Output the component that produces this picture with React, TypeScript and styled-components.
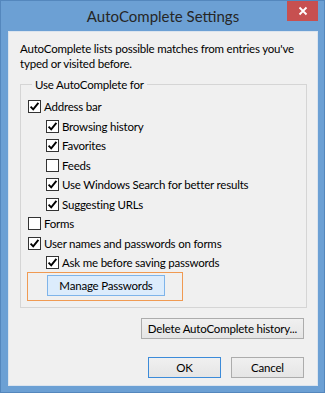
import React from "react";
import styled, { createGlobalStyle } from "styled-components";

const Global = createGlobalStyle`
  html, body { margin: 0; padding: 0; background: #6b9fd3; }
  body { font-family: Lato, "Liberation Sans", sans-serif; }
`;

const Window = styled.div`
  width: 325px;
  height: 393px;
  box-sizing: border-box;
  background: #6ca0d4;
  border: 1px solid #5487bd;
  display: flex;
  flex-direction: column;
  padding: 0 6px 6px 7px;
`;

const TitleBar = styled.div`
  height: 30px;
  display: grid;
  grid-template-columns: 1fr auto 1fr;
  align-items: start;
`;

const Title = styled.div`
  grid-column: 2;
  font-size: 15px;
  line-height: 30px;
  color: #262626;
`;

const Close = styled.div`
  grid-column: 3;
  justify-self: end;
  width: 31px;
  height: 20px;
  background: #c75050;
  color: #fff;
  display: flex;
  align-items: center;
  justify-content: center;
`;

const Panel = styled.div`
  flex: 1;
  background: #f0f0f0;
  border: 1px solid #dbe4ee;
  padding: 9px 10px 0 11px;
  display: flex;
  flex-direction: column;
  font-size: 11.5px;
  letter-spacing: -0.2px;
  line-height: 15px;
  color: #000;
`;

const Intro = styled.p`
  margin: 0 0 6px;
  white-space: nowrap;
`;

const Group = styled.fieldset`
  margin: 0;
  border: 1px solid #d5d5d5;
  padding: 5px 7px 6px 7px;
  min-width: 0;
`;

const Legend = styled.legend`
  margin-left: 4px;
  padding: 0 3px;
  line-height: 15px;
`;

const Row = styled.label<{ $level?: number }>`
  display: flex;
  align-items: center;
  gap: 3px;
  height: 19.5px;
  white-space: nowrap;
  padding-left: ${(p) => (p.$level ?? 0) * 18}px;
`;

const Box = styled.span`
  width: 13px;
  height: 13px;
  box-sizing: border-box;
  border: 1px solid #333;
  background: #fff;
  display: inline-flex;
  flex-shrink: 0;
`;

const Highlight = styled.div`
  width: fit-content;
  margin: -1px 0 0 -1px;
  border: 1px solid #f09a52;
  padding: 2px 17px 4px 19px;
`;

const Button = styled.div<{ $width: number; $variant?: "default" | "hot" }>`
  width: ${(p) => p.$width}px;
  height: 21px;
  box-sizing: border-box;
  display: flex;
  align-items: center;
  justify-content: center;
  white-space: nowrap;
  border: 1px solid
    ${(p) =>
      p.$variant === "default" ? "#3c8bd9" : p.$variant === "hot" ? "#7eb4ea" : "#acacac"};
  background: ${(p) =>
    p.$variant === "hot" ? "#dcecfc" : "linear-gradient(#f0f0f0, #e5e5e5)"};
  color: #000;
  font-size: 11.5px;
`;

const ButtonRow = styled.div<{ $top: number }>`
  display: flex;
  justify-content: flex-end;
  gap: 10px;
  margin-top: ${(p) => p.$top}px;
  padding-right: 3px;
`;

function Check({ on }: { on?: boolean }) {
  return (
    <Box>
      {on && (
        <svg width="11" height="11" viewBox="0 0 11 11">
          <path d="M1.6 5.6 L4.2 8.3 L9.4 1.8" fill="none" stroke="#000" strokeWidth="1.9" />
        </svg>
      )}
    </Box>
  );
}

const items: [string, number, boolean][] = [
  ["Address bar", 0, true],
  ["Browsing history", 1, true],
  ["Favorites", 1, true],
  ["Feeds", 1, false],
  ["Use Windows Search for better results", 1, true],
  ["Suggesting URLs", 1, true],
  ["Forms", 0, false],
  ["User names and passwords on forms", 0, true],
  ["Ask me before saving passwords", 1, true],
];

export default function App() {
  return (
    <>
      <Global />
      <Window>
        <TitleBar>
          <Title>AutoComplete Settings</Title>
          <Close>
            <svg width="10" height="10" viewBox="0 0 10 10">
              <path d="M1.5 1.5 L8.5 8.5 M8.5 1.5 L1.5 8.5" stroke="#fff" strokeWidth="1.8" />
            </svg>
          </Close>
        </TitleBar>
        <Panel>
          <Intro>
            AutoComplete lists possible matches from entries you've
            <br />
            typed or visited before.
          </Intro>
          <Group>
            <Legend>Use AutoComplete for</Legend>
            {items.map(([label, level, on]) => (
              <Row key={label} $level={level}>
                <Check on={on} />
                {label}
              </Row>
            ))}
            <Highlight>
              <Button $width={118} $variant="hot">Manage Passwords</Button>
            </Highlight>
          </Group>
          <ButtonRow $top={10}>
            <Button $width={163}>Delete AutoComplete history...</Button>
          </ButtonRow>
          <ButtonRow $top={18}>
            <Button $width={73} $variant="default">OK</Button>
            <Button $width={73}>Cancel</Button>
          </ButtonRow>
        </Panel>
      </Window>
    </>
  );
}
